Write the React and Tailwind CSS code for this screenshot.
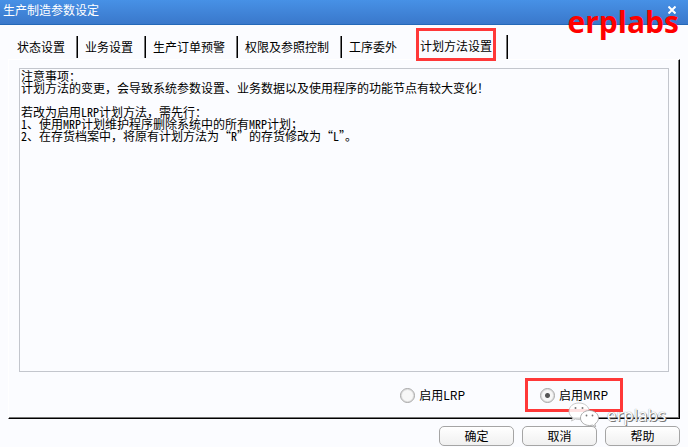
import { useState } from 'react';

const tabs = ['状态设置', '业务设置', '生产订单预警', '权限及参照控制', '工序委外'];

const notes = `注意事项：
计划方法的变更，会导致系统参数设置、业务数据以及使用程序的功能节点有较大变化！

若改为启用LRP计划方法，需先行：
1、使用MRP计划维护程序删除系统中的所有MRP计划；
2、在存货档案中，将原有计划方法为“R”的存货修改为“L”。`;

const Radio = ({ label, value, plan, onChange }) => (
  <label className="flex items-center gap-1">
    <input
      type="radio"
      name="plan"
      value={value}
      checked={plan === value}
      onChange={() => onChange(value)}
      className="appearance-none w-[15px] h-[15px] rounded-full border border-[#a5a5a5] bg-[#f7f7f7] shadow-[inset_0_0_0_1px_#dedede] checked:bg-[radial-gradient(circle,#555_2px,#f7f7f7_3px)]"
    />
    <span>{label}</span>
  </label>
);

const WechatIcon = () => (
  <svg width="32" height="26" viewBox="0 0 32 26" aria-hidden="true">
    <g fill="#fff" stroke="#999" strokeWidth="0.8">
      <path
        fillOpacity="0.85"
        stroke="#bbb"
        d="M11 1C5 1 1 4.700 1 9.300c0 2.700 1.400 4.900 3.700 6.500L3.500 19l3.900-2c1.200.3 2.300.5 3.600.5 5.800 0 10.200-3.600 10.200-8.200S16.800 1 11 1Z"
      />
      <path d="M21.500 8.500c-5 0-9 3.300-9 7.500s4 7.500 9 7.500c1 0 2-.2 3-.4l3.200 1.700-.9-2.800c2.300-1.500 3.700-3.500 3.700-6 0-4.200-4-7.500-9-7.500Z" />
    </g>
    <g fill="#777">
      <circle cx="7.500" cy="6" r="1" />
      <circle cx="14.500" cy="6" r="1" />
      <circle cx="18.500" cy="13.500" r="0.900" />
      <circle cx="24.500" cy="13.500" r="0.900" />
    </g>
  </svg>
);

const App = () => {
  const [active, setActive] = useState('计划方法设置');
  const [plan, setPlan] = useState('MRP');

  return (
    <div className="relative min-h-screen bg-[#fbfcff] text-black text-[12px] leading-[16px] font-['Noto_Sans_CJK_SC',sans-serif]">
      {/* Title bar */}
      <header className="flex justify-between h-[25px] pl-[3px] pr-3 pt-[2px] bg-linear-to-b from-[#4791e6] to-[#3a78cb] border-b border-[#2468b8] text-white">
        <h1>生产制造参数设定</h1>
        <button aria-label="关闭" className="self-start mt-1">
          <svg width="8" height="8" viewBox="0 0 8 8" stroke="#fff" strokeWidth="2">
            <path d="M0.500 0.500 7.500 7.500M7.500 0.500 0.500 7.500" />
          </svg>
        </button>
      </header>

      <main className="px-2 pt-[3px]">
        {/* Tabs */}
        <nav className="flex items-end h-[31px] pl-[2px]">
          {tabs.map(tab => (
            <button
              key={tab}
              onClick={() => setActive(tab)}
              className="h-[22px] pl-[7px] pr-3 mb-px border-r border-black shadow-[inset_-1px_0_0_#777] nth-5:border-transparent nth-5:shadow-none whitespace-nowrap"
            >
              {tab}
            </button>
          ))}
          <div className="flex items-end border-r border-black shadow-[inset_-1px_0_0_#777] pr-[11px] h-6">
            <button
              onClick={() => setActive('计划方法设置')}
              aria-pressed={active === '计划方法设置'}
              className="relative z-10 h-[33px] px-px pt-[2px] ml-[6px] -mb-[2px] border-3 border-[#ff3838] whitespace-nowrap"
            >
              计划方法设置
            </button>
          </div>
        </nav>

        {/* Panel */}
        <section className="pt-2 pl-[10px] pr-[10px] border border-l-white border-t-white border-r-black border-b-black shadow-[inset_-1px_-1px_0_#777]">
          <textarea
            readOnly
            aria-label="注意事项"
            value={notes}
            className="block w-full h-[304px] px-[1px] py-px resize-none outline-none border border-[#c3c6cd] leading-[12px] font-['Noto_Sans_Mono_CJK_SC','Noto_Sans_CJK_SC',monospace]"
          />
          <div className="flex justify-end items-start gap-[60px] h-[46px] pt-[6px] pr-[46px]">
            <div className="flex items-center h-[34px]">
              <Radio label="启用LRP" value="LRP" plan={plan} onChange={setPlan} />
            </div>
            <div className="flex items-center h-[34px] px-3 border-3 border-[#ff3838]">
              <Radio label="启用MRP" value="MRP" plan={plan} onChange={setPlan} />
            </div>
          </div>
        </section>
      </main>

      {/* Buttons */}
      <footer className="flex justify-end gap-2 pt-[7px] pr-2">
        {['确定', '取消', '帮助'].map(name => (
          <button
            key={name}
            className="w-[75px] h-5 rounded-[5px] border border-[#a5a5a5] bg-linear-to-b from-white to-[#f0f0f0]"
          >
            {name}
          </button>
        ))}
      </footer>

      {/* Watermarks */}
      <span className="absolute top-1 right-[9px] text-[30px] leading-[36px] font-bold text-[#ff0000] font-['Open_Sans',sans-serif]">
        erplabs
      </span>
      <div className="absolute right-[22px] bottom-[19px] flex items-center gap-[7px] pointer-events-none">
        <WechatIcon />
        <span className="text-[17px] leading-[20px] text-white font-['Open_Sans',sans-serif] [text-shadow:1px_1px_0_#777,0_0_1px_#777]">
          erplabs
        </span>
      </div>
    </div>
  );
};

export default App;
